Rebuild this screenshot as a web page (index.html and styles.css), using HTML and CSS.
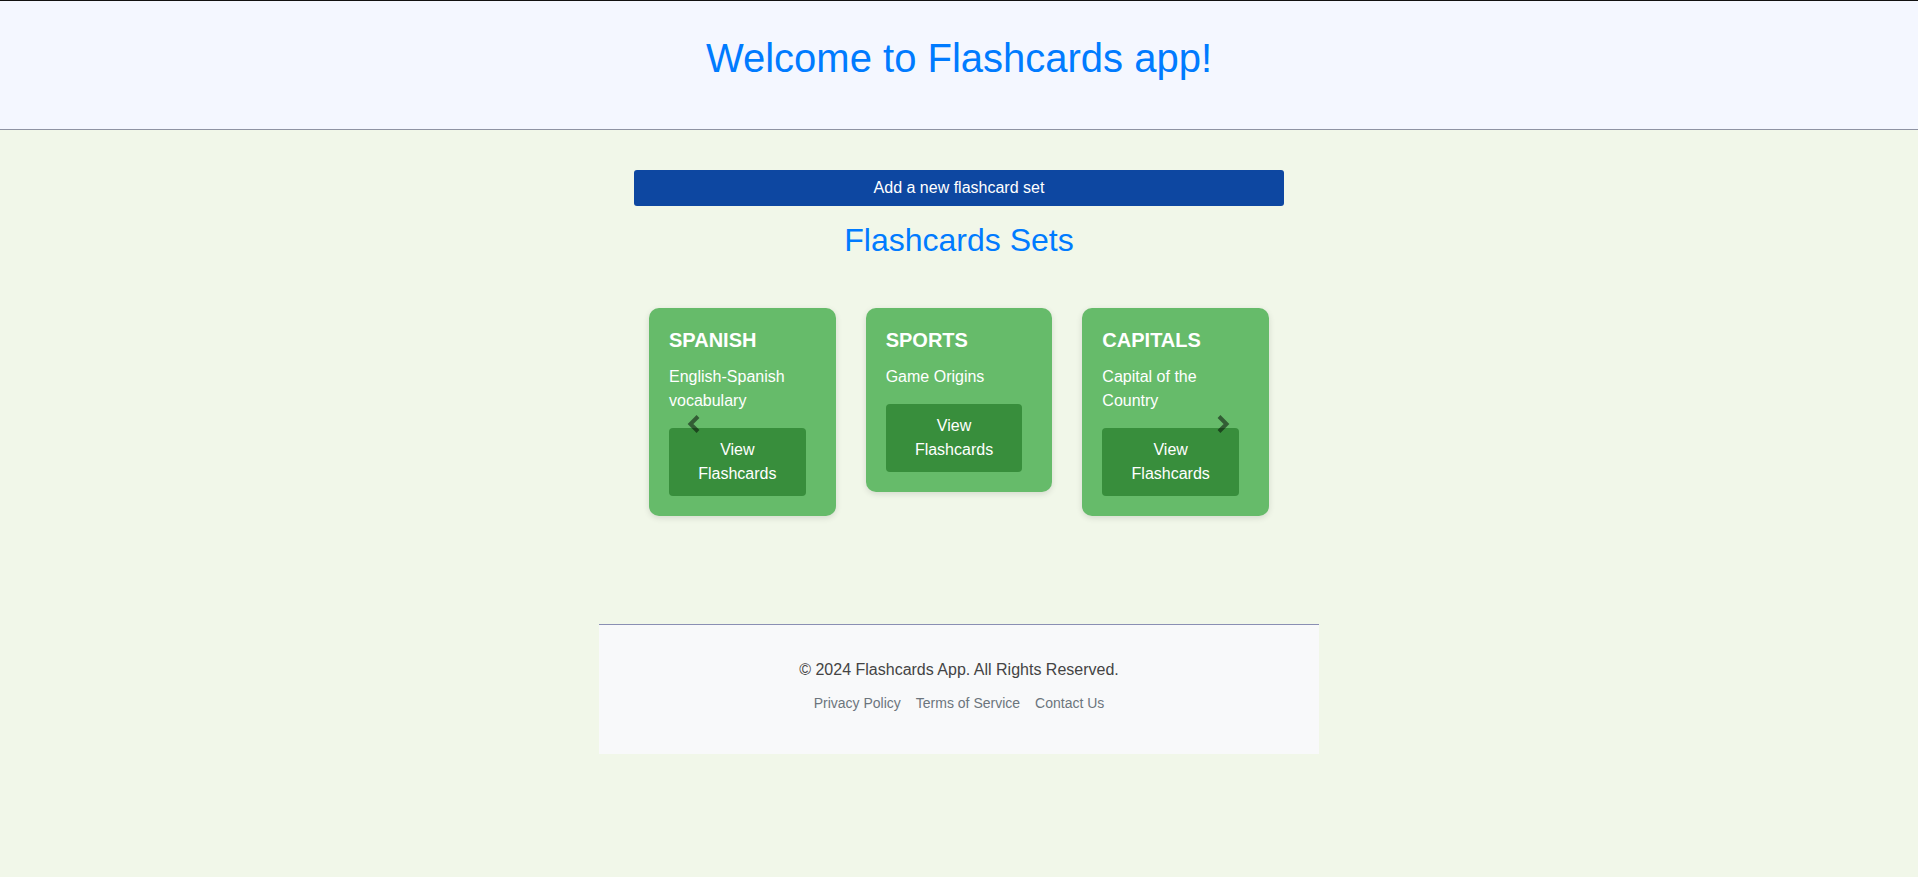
FILE: index.html
```html
<!DOCTYPE html>
<html lang="en">
<head>
<meta charset="utf-8">
<title>Flashcards App</title>
<link rel="stylesheet" href="styles.css">
</head>
<body>
<header class="site-header">
  <h1 class="site-title">Welcome to Flashcards app!</h1>
</header>
<main class="main">
  <button class="add-btn" type="button">Add a new flashcard set</button>
  <h2 class="sets-title">Flashcards Sets</h2>
  <div class="carousel">
    <div class="card">
      <h3 class="card-title">SPANISH</h3>
      <p class="card-desc">English-Spanish vocabulary</p>
      <button class="view-btn" type="button">View Flashcards</button>
    </div>
    <div class="card">
      <h3 class="card-title">SPORTS</h3>
      <p class="card-desc">Game Origins</p>
      <button class="view-btn" type="button">View Flashcards</button>
    </div>
    <div class="card">
      <h3 class="card-title">CAPITALS</h3>
      <p class="card-desc">Capital of the Country</p>
      <button class="view-btn" type="button">View Flashcards</button>
    </div>
    <span class="nav nav-prev" aria-label="Previous">
      <svg width="14" height="20" viewBox="0 0 14 20"><polyline points="11,2.5 3.5,10 11,17.5" fill="none" stroke="currentColor" stroke-width="4"/></svg>
    </span>
    <span class="nav nav-next" aria-label="Next">
      <svg width="14" height="20" viewBox="0 0 14 20"><polyline points="3,2.5 10.5,10 3,17.5" fill="none" stroke="currentColor" stroke-width="4"/></svg>
    </span>
  </div>
</main>
<footer class="site-footer">
  <p class="copyright">© 2024 Flashcards App. All Rights Reserved.</p>
  <nav class="footer-links">
    <a href="#">Privacy Policy</a>
    <a href="#">Terms of Service</a>
    <a href="#">Contact Us</a>
  </nav>
</footer>
</body>
</html>
```

FILE: styles.css
```css
* {
  box-sizing: border-box;
}

body {
  margin: 0;
  background: #f1f7e9;
  font-family: "Liberation Sans", Arial, sans-serif;
  color: #333;
}

.site-header {
  background: #f4f7ff;
  border-top: 1px solid #111;
  border-bottom: 1px solid #8e93a3;
  padding: 34px 0 48px;
  text-align: center;
}

.site-title {
  margin: 0;
  font-size: 40px;
  font-weight: normal;
  line-height: 46px;
  color: #007bff;
}

.main {
  width: 650px;
  margin: 40px auto 0;
}

.add-btn {
  display: block;
  width: 100%;
  height: 36px;
  padding: 0;
  border: none;
  border-radius: 3px;
  background: #0d47a1;
  color: #fff;
  font-family: inherit;
  font-size: 16px;
  line-height: 36px;
}

.sets-title {
  margin: 16px 0 0;
  font-size: 32px;
  font-weight: normal;
  line-height: 37px;
  color: #007bff;
  text-align: center;
}

.carousel {
  position: relative;
  width: 620px;
  margin: 49px auto 0;
  display: flex;
  align-items: flex-start;
  gap: 30px;
}

.card {
  flex: 1 1 0;
  background: #66bb6a;
  border-radius: 10px;
  padding: 20px;
  box-shadow: 0 2px 6px rgba(0, 0, 0, 0.12);
  color: #fff;
}

.card-title {
  margin: 0 0 13px;
  font-size: 20px;
  font-weight: bold;
  line-height: 24px;
}

.card-desc {
  margin: 0 0 15px;
  font-size: 16px;
  line-height: 24px;
}

.view-btn {
  display: block;
  width: calc(100% - 10px);
  padding: 10px 15px;
  border: none;
  border-radius: 4px;
  background: #388e3c;
  color: #fff;
  font-family: inherit;
  font-size: 16px;
  line-height: 24px;
  text-align: center;
}

.nav {
  position: absolute;
  top: 106px;
  width: 14px;
  height: 20px;
  color: rgba(0, 0, 0, 0.5);
  display: flex;
}

.nav-prev {
  left: 38px;
}

.nav-next {
  right: 39px;
}

.site-footer {
  width: 720px;
  margin: 108px auto 0;
  background: #f8f9fa;
  border-top: 1px solid #8a8fb3;
  padding: 36px 20px 43px;
  text-align: center;
}

.copyright {
  margin: 0 0 16px;
  font-size: 16px;
  line-height: 18px;
  color: #444;
}

.footer-links {
  display: flex;
  justify-content: center;
  gap: 15px;
  font-size: 14px;
  line-height: 16px;
}

.footer-links a {
  color: #6c757d;
  text-decoration: none;
}
```
